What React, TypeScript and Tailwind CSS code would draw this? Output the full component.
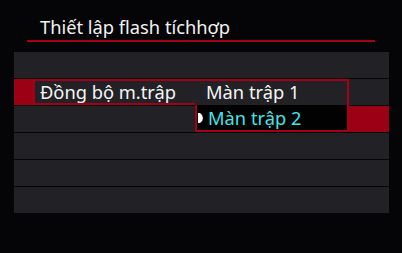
const font = { fontFamily: '"Noto Sans", "Open Sans", sans-serif' };

function Row({ children }: { children?: React.ReactNode }) {
  return <div className="flex h-[26px] bg-[#222125]">{children}</div>;
}

export default function App() {
  return (
    <div className="w-[402px] h-[253px] bg-[#050407] overflow-hidden text-white" style={font}>
      <div className="pt-[15px] pl-[40px] h-[39px] text-[18.3px] leading-[24px] text-[#f2f2f2]">
        Thiết lập flash tíchhợp
      </div>
      <div className="mt-[1px] ml-[27px] w-[348px] h-[2px] bg-[#a40019]" />

      <div className="mt-[10px] ml-[14px] w-[375px] flex flex-col gap-px text-[18.3px] leading-[22px]">
        <Row />
        {/* selected row with popup */}
        <div className="flex h-[26px]">
          <div className="w-[19px] bg-[#9b0015]" />
          <div className="w-[316px] flex border-2 border-b-0 border-[#a40019] bg-[#222125]">
            <div className="w-[160px] border-b-2 border-[#a40019] pl-[5px] text-[#f5f5f5]">Đồng bộ m.trập</div>
            <div className="flex-1 pl-[11px] text-[#f5f5f5]">Màn trập 1</div>
          </div>
          <div className="flex-1 bg-[#222125]" />
        </div>
        <div className="flex h-[26px]">
          <div className="w-[181px] bg-[#222125]" />
          <div className="w-[154px] flex items-center bg-[#020203] border-2 border-t-0 border-[#a40019] -mt-px h-[27px]">
            <svg width="5" height="10" viewBox="0 0 5 10" className="ml-[1px] mr-[5px]">
              <path d="M0 0 L2 0 Q5 2 5 5 Q5 8 2 10 L0 10 Z" fill="#ffffff" />
            </svg>
            <span className="text-[#43e3e6]">Màn trập 2</span>
          </div>
          <div className="flex-1 bg-[#9b0015]" />
        </div>
        <Row />
        <Row />
        <Row />
      </div>
    </div>
  );
}
